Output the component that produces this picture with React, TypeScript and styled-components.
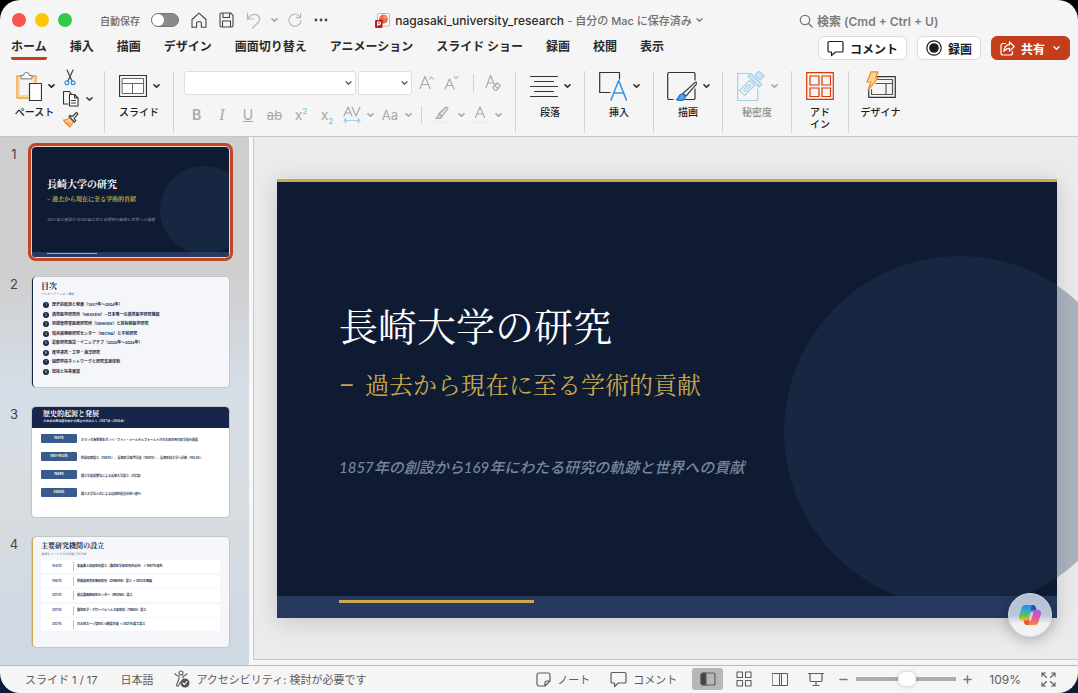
import React from "react";
import styled, { createGlobalStyle, css } from "styled-components";

const ui = `Inter, "Noto Sans CJK JP", sans-serif`;
const serif = `"Noto Serif CJK JP", "Noto Sans CJK JP", serif`;

const Global = createGlobalStyle`
  *, *::before, *::after { box-sizing: border-box; }
  html { background: linear-gradient(#000 0%, #000 50%, #0a1c38 50%); min-height: 100%; }
  body { margin: 0; font-family: ${ui}; color: #222; }
  button, input, select { font-family: inherit; }
  ol, ul { list-style: none; margin: 0; padding: 0; }
`;

/* ---------- window frame ---------- */

const Window = styled.div`
  display: grid;
  grid-template-rows: auto 1fr auto;
  min-height: 100vh;
  border-radius: 20px;
  overflow: hidden;
  background: #f5f5f5;
`;

const bare = css`
  border: 0;
  padding: 0;
  margin: 0;
  background: none;
  color: inherit;
`;

const IconButton = styled.button<{ $w?: number; $tone?: string }>`
  ${bare}
  display: inline-flex;
  align-items: center;
  justify-content: center;
  flex: none;
  width: ${(p) => (p.$w ? `${p.$w}px` : "auto")};
  color: ${(p) => p.$tone || "#444"};
`;

/* ---------- title bar ---------- */

const TitleBar = styled.div`
  display: grid;
  grid-template-columns: 1fr auto 1fr;
  align-items: center;
  height: 36px;
  padding: 4px 12px 0;
`;

const TitleLeft = styled.div`
  display: flex;
  align-items: center;
`;

const Lights = styled.div`
  display: flex;
  gap: 9px;
`;

const Light = styled.button<{ $color: string }>`
  ${bare}
  width: 14px;
  height: 14px;
  border-radius: 50%;
  background: ${(p) => p.$color};
`;

const AutoSave = styled.label`
  display: flex;
  align-items: center;
  gap: 11px;
  margin-left: 28px;
  font-size: 10px;
  font-weight: 500;
  color: #6b6b6b;
`;

const Toggle = styled.input`
  appearance: none;
  margin: 0;
  width: 28px;
  height: 14px;
  border-radius: 7px;
  background: #8a8a8a;
  border: 1px solid #777;
  &::before {
    content: "";
    display: block;
    width: 12px;
    height: 12px;
    border-radius: 50%;
    background: #fff;
  }
`;

const QuickTools = styled.div`
  display: flex;
  align-items: center;
  gap: 10px;
  margin-left: 12px;
`;

const DocTitle = styled.button`
  ${bare}
  display: flex;
  align-items: center;
  gap: 4px;
  font-size: 12px;
  font-weight: 500;
  color: #2b2b2b;
  white-space: nowrap;
`;

const DocState = styled.span`
  font-size: 11px;
  color: #6e6e6e;
`;

const Search = styled.label`
  justify-self: end;
  display: flex;
  align-items: center;
  gap: 4px;
  margin: 2px 115px 0 0;
  color: #777;
`;

const SearchInput = styled.input`
  ${bare}
  width: 134px;
  height: 20px;
  font-size: 12px;
  font-weight: 600;
  outline: none;
  &::placeholder { color: #7c7c7c; opacity: 1; }
`;

/* ---------- tabs ---------- */

const TabBar = styled.div`
  display: flex;
  justify-content: space-between;
  height: 24px;
  padding: 0 8px 0 11px;
`;

const Tabs = styled.nav`
  display: flex;
  gap: 23px;
`;

const Tab = styled.button<{ $active?: boolean }>`
  ${bare}
  height: 24px;
  padding-bottom: 3px;
  font-size: 12px;
  line-height: 20px;
  font-weight: 700;
  color: #2a2a2a;
  white-space: nowrap;
  ${(p) =>
    p.$active &&
    css`
      background: linear-gradient(#c43e1c, #c43e1c) 0 100% / 100% 3px no-repeat;
      border-radius: 2px;
    `}
`;

const Actions = styled.div`
  display: flex;
  gap: 10px;
`;

const Action = styled.button<{ $primary?: boolean }>`
  ${bare}
  display: flex;
  align-items: center;
  gap: 6px;
  height: 24px;
  padding: 0 8px;
  border: 1px solid ${(p) => (p.$primary ? "#c43e1c" : "#dcdcdc")};
  border-radius: 6px;
  background: ${(p) => (p.$primary ? "#c43e1c" : "#fff")};
  color: ${(p) => (p.$primary ? "#fff" : "#1c1c1c")};
  font-size: 12px;
  font-weight: 700;
  white-space: nowrap;
`;

/* ---------- ribbon ---------- */

const Ribbon = styled.div`
  display: flex;
  height: 77px;
  padding: 11px 0 3px;
  border-bottom: 1px solid #c6c6c6;
`;

const Group = styled.section<{ $w: number; $last?: boolean }>`
  flex: none;
  width: ${(p) => p.$w}px;
  display: flex;
  flex-direction: column;
  align-items: center;
  border-right: ${(p) => (p.$last ? 0 : "1px solid #d4d4d4")};
`;

const ClipboardGroup = styled(Group)`
  flex-direction: row;
  align-items: flex-start;
  padding-left: 14px;
  gap: 7px;
`;

const Stack = styled.div`
  display: flex;
  flex-direction: column;
  align-items: center;
`;

const SmallStack = styled.div`
  display: grid;
  grid-template-rows: 17px 17px 17px;
  row-gap: 4px;
  align-items: center;
  justify-items: start;
  margin-top: -2px;
`;

const BigButton = styled.button`
  ${bare}
  display: flex;
  align-items: center;
  gap: 6px;
  height: 30px;
`;

const Caption = styled.span<{ $muted?: boolean }>`
  margin-top: 5px;
  font-size: 10px;
  line-height: 12px;
  font-weight: 500;
  text-align: center;
  color: ${(p) => (p.$muted ? "#8d8d8d" : "#1c1c1c")};
`;

const FontGroup = styled(Group)`
  align-items: stretch;
  padding-left: 10px;
  gap: 8px;
`;

const FontRow = styled.div`
  display: flex;
  align-items: center;
  height: 24px;
`;

const SelectBox = styled.span<{ $w: number }>`
  position: relative;
  display: inline-flex;
  width: ${(p) => p.$w}px;
  margin-right: 2px;
  svg {
    position: absolute;
    right: 4px;
    top: 9px;
    pointer-events: none;
    color: #555;
  }
`;

const Select = styled.select`
  appearance: none;
  width: 100%;
  height: 24px;
  border: 1px solid #dedede;
  border-radius: 3px;
  background: #fff;
`;

const Rule = styled.span`
  width: 1px;
  height: 18px;
  margin: 0 11px 0 9px;
  background: #d0d0d0;
`;

const Format = styled.button<{ $w: number; $size?: number }>`
  ${bare}
  flex: none;
  width: ${(p) => p.$w}px;
  font-size: ${(p) => p.$size || 14}px;
  line-height: 20px;
  color: #a9a9a9;
  text-align: center;
  b { font-weight: 600; }
  i { font-family: "Liberation Serif", serif; font-size: 16px; }
`;

const Script = styled.span<{ $down?: boolean }>`
  color: #8fc4e0;
  font-size: 8px;
  font-weight: 600;
  line-height: 0;
  vertical-align: ${(p) => (p.$down ? "-4px" : "6px")};
`;

/* ---------- work area ---------- */

const Work = styled.main`
  display: grid;
  grid-template-columns: 249px 1fr;
  min-width: 0;
  border-bottom: 1px solid #b9b9b9;
`;

const Panel = styled.aside`
  padding-top: 10px;
  background: linear-gradient(#cfcece 0%, #d0cfd0 27%, #d2d8de 40%, #d5dee7 48%, #d9dcdf 70%, #d2dae2 85%, #cfd9e3 100%);
`;

const ThumbItem = styled.li`
  display: grid;
  grid-template-columns: 32px 197px;
  height: 110px;
  & + & { margin-top: 20px; }
`;

const ThumbNumber = styled.span`
  padding-right: 4px;
  font-size: 13px;
  line-height: 15px;
  text-align: center;
  color: #444;
`;

const Thumb = styled.button<{ $bg: string; $selected?: boolean; $edge?: string }>`
  ${bare}
  position: relative;
  display: flex;
  flex-direction: column;
  justify-content: flex-start;
  align-items: stretch;
  text-align: left;
  height: 110px;
  border-radius: 4px;
  background: ${(p) => p.$bg};
  border-left: ${(p) => (p.$edge ? `1px solid ${p.$edge}` : 0)};
  box-shadow: ${(p) =>
    p.$selected ? "0 0 0 1px #e8d8d4, 0 0 0 4px #c14526" : "0 0 0 1px #c3c5c8"};
`;

const Clip = styled.span`
  position: relative;
  display: block;
  height: 110px;
  border-radius: 3px;
  overflow: hidden;
`;

const EditorColumn = styled.div`
  display: grid;
  grid-template-rows: 1fr 5px;
  min-width: 0;
  border-left: 4px solid #f7f7f7;
`;

const Editor = styled.section`
  position: relative;
  display: flex;
  align-items: center;
  overflow: hidden;
  padding: 0 21px 0 23px;
  background: #ebebeb;
  border-left: 1px solid #c9c9c9;
  border-bottom: 1px solid #c6c6c6;
`;

const Slide = styled.article`
  position: relative;
  width: 100%;
  aspect-ratio: 780 / 439;
  background: #0f1b33;
  border-top: 3px solid #c9a94a;
  box-shadow: 0 4px 22px rgba(0, 0, 0, 0.16);
`;

const Disc = styled.span`
  position: absolute;
  left: 65%;
  top: 17%;
  width: 45%;
  aspect-ratio: 1;
  border-radius: 50%;
  background: rgba(39, 64, 93, 0.33);
`;

const SlideFooter = styled.span<{ $mini?: boolean }>`
  position: absolute;
  left: 0;
  right: 0;
  bottom: 0;
  height: ${(p) => (p.$mini ? 5 : 22)}px;
  padding: ${(p) => (p.$mini ? "1px 15px" : "4px 62px")};
  background: #253a5e;
  &::before {
    content: "";
    display: block;
    width: ${(p) => (p.$mini ? "50px" : "195px")};
    height: ${(p) => (p.$mini ? 1 : 3)}px;
    background: #c9a94a;
  }
`;

const Cover = styled.div`
  position: relative;
  padding: 114px 0 0 62px;
`;

const CoverTitle = styled.h1`
  margin: 0;
  font-family: ${serif};
  font-size: 39px;
  line-height: 56px;
  font-weight: 400;
  color: #fff;
`;

const CoverSub = styled.p`
  margin: 16px 0 0;
  font-family: ${serif};
  font-size: 24px;
  line-height: 32px;
  color: #c9a94a;
`;

const Dash = styled.span`
  display: inline-block;
  width: 26px;
  font-family: Roboto, sans-serif;
`;

const CoverNote = styled.p`
  margin: 55px 0 0;
  font-family: Lato, "Noto Sans CJK JP", sans-serif;
  font-size: 15px;
  line-height: 20px;
  font-style: italic;
  font-weight: 500;
  color: #76859c;
`;

const Mini = styled.span<{
  $size: number;
  $lh: number;
  $color: string;
  $top?: number;
  $left?: number;
  $bold?: boolean;
  $serif?: boolean;
  $italic?: boolean;
}>`
  display: block;
  position: relative;
  margin: ${(p) => p.$top || 0}px 0 0 ${(p) => p.$left || 0}px;
  font-family: ${(p) => (p.$serif ? serif : `Lato, "Noto Sans CJK JP", sans-serif`)};
  font-size: ${(p) => p.$size}px;
  line-height: ${(p) => p.$lh}px;
  font-weight: ${(p) => (p.$bold ? 700 : 400)};
  font-style: ${(p) => (p.$italic ? "italic" : "normal")};
  color: ${(p) => p.$color};
  white-space: nowrap;
`;

const AgendaList = styled.span`
  display: flex;
  flex-direction: column;
  justify-content: space-between;
  height: 73px;
  margin: 5px 0 0 10px;
`;

const AgendaRow = styled.span`
  display: flex;
  align-items: center;
  gap: 3px;
  height: 6px;
`;

const AgendaDot = styled.span`
  width: 6px;
  height: 6px;
  border-radius: 50%;
  background: #16264a;
  color: #fff;
  font-size: 3px;
  line-height: 6px;
  text-align: center;
`;

const MiniHead = styled.span`
  display: block;
  height: 21px;
  margin-bottom: 6px;
  padding: 2px 0 0 11px;
  border-radius: 4px 4px 0 0;
  background: #16264a;
`;

const TimeRow = styled.span`
  display: flex;
  align-items: center;
  gap: 4px;
  height: 9px;
  margin: 0 0 9px 9px;
`;

const YearBadge = styled.span`
  width: 36px;
  height: 9px;
  border-radius: 1px;
  background: #385a8c;
  color: #fff;
  font-size: 3px;
  line-height: 9px;
  font-weight: 700;
  text-align: center;
`;

const TimeText = styled.span`
  padding-top: 4px;
  font-size: 3px;
  line-height: 5px;
  font-weight: 700;
  color: #2c3a54;
  white-space: nowrap;
`;

const MiniTable = styled.span`
  display: flex;
  flex-direction: column;
  justify-content: space-between;
  height: 71px;
  margin: 3px 9px 0 8px;
`;

const MiniRow = styled.span`
  display: grid;
  grid-template-columns: 33px 1fr;
  align-items: center;
  height: 13px;
  background: #fff;
  font-size: 3px;
  line-height: 9px;
  font-weight: 700;
  color: #24324e;
  white-space: nowrap;
`;

const MiniYear = styled.span`
  text-align: center;
  border-right: 1px solid #b9c1cd;
  color: #385a8c;
`;

const MiniCell = styled.span`
  padding-left: 3px;
`;

const Copilot = styled.button`
  ${bare}
  position: absolute;
  right: 26px;
  bottom: 22px;
  width: 44px;
  height: 44px;
  display: flex;
  align-items: center;
  justify-content: center;
  border-radius: 50%;
  border: 1px solid #d5deea;
  background: linear-gradient(#b4c0d6 0%, #bcc6d8 50%, #eef0f2 70%, #f2f3f4 100%);
  box-shadow: 0 3px 14px rgba(0, 0, 0, 0.25);
`;

/* ---------- status bar ---------- */

const Status = styled.footer`
  display: flex;
  align-items: center;
  justify-content: space-between;
  height: 27px;
  padding: 0 22px 1px 25px;
  font-size: 12px;
  color: #5c5c5c;
`;

const StatusSide = styled.div`
  display: flex;
  align-items: center;
`;

const StatusButton = styled.button<{ $left?: number }>`
  ${bare}
  display: flex;
  align-items: center;
  gap: 6px;
  margin-left: ${(p) => p.$left || 0}px;
  font-size: 11px;
  white-space: nowrap;
`;

const ViewButton = styled.button<{ $active?: boolean }>`
  ${bare}
  display: flex;
  align-items: center;
  justify-content: center;
  width: 31px;
  height: 22px;
  margin-left: 15px;
  border-radius: 3px;
  background: ${(p) => (p.$active ? "#b6b8b7" : "none")};
`;

const ZoomSlider = styled.input`
  appearance: none;
  width: 100px;
  height: 16px;
  margin: 0 7px;
  background: linear-gradient(#acacac, #acacac) 0 50% / 100% 4px no-repeat;
  &::-webkit-slider-thumb {
    appearance: none;
    width: 18px;
    height: 14px;
    border-radius: 7px;
    background: #fff;
    box-shadow: 0 0 4px rgba(0, 0, 0, 0.2);
  }
`;

const ZoomValue = styled.span`
  margin: 0 20px 0 17px;
`;

/* ---------- icons ---------- */

type IconProps = { w: number; h: number; children: React.ReactNode; sw?: number };
const Icon = ({ w, h, children, sw = 1 }: IconProps) => (
  <svg
    width={w}
    height={h}
    viewBox={`0 0 ${w} ${h}`}
    fill="none"
    stroke="currentColor"
    strokeWidth={sw}
    strokeLinecap="round"
    strokeLinejoin="round"
    aria-hidden="true"
  >
    {children}
  </svg>
);

const Chevron = ({ bold }: { bold?: boolean }) => (
  <Icon w={7} h={6} sw={bold ? 1.6 : 1.3}>
    <path d="M1 1.8 3.5 4.200 6 1.800" />
  </Icon>
);

const HomeIcon = () => (
  <Icon w={16} h={17} sw={1.1}>
    <path d="M1 7.5 8 1.2l7 6.3v7.8h-4.6v-4.5a1 1 0 0 0-1-1H6.6a1 1 0 0 0-1 1v4.5H1z" />
  </Icon>
);

const SaveIcon = () => (
  <Icon w={15} h={16} sw={1.1}>
    <path d="M1 2.5A1.5 1.5 0 0 1 2.5 1h9.2L14 3.3v10.200a1.5 1.5 0 0 1-1.5 1.5h-10A1.5 1.5 0 0 1 1 13.5zM4 1v4.5h6.5V1M3.5 15V9h8v6" />
  </Icon>
);

const UndoIcon = () => (
  <Icon w={15} h={17} sw={1.2}>
    <path d="M1.5 1v6h6M1.5 7C4 3.5 7 1.8 10 2.6c3.600 1 4.700 4.800 2.400 7.600L6.500 16" />
  </Icon>
);

const RedoIcon = () => (
  <Icon w={15} h={16} sw={1.2}>
    <path d="M13.500 1v4.500H9M13.300 5.300A6.500 6.500 0 1 0 14 8.500" />
  </Icon>
);

const MoreIcon = () => (
  <Icon w={14} h={4}>
    <g fill="currentColor" stroke="none">
      <circle cx="2" cy="2" r="1.4" />
      <circle cx="7" cy="2" r="1.4" />
      <circle cx="12" cy="2" r="1.4" />
    </g>
  </Icon>
);

const FileIcon = () => (
  <svg width="16" height="16" viewBox="0 0 16 16" aria-hidden="true">
    <rect x="2.5" y="1.5" width="12" height="12.5" rx="1.5" fill="#fff" stroke="#b9b9b9" />
    <circle cx="8.5" cy="7" r="4.500" fill="#ed6c47" />
    <path d="M8.500 2.500A4.500 4.500 0 0 1 13 7H8.500z" fill="#ff8f6b" />
    <path d="M4 7h4.500V11.500A4.500 4.500 0 0 1 4 7z" fill="#d35230" />
    <rect x="0" y="8" width="7.5" height="8" rx="1" fill="#b7221f" />
    <path d="M2.800 14V10h1.500a1.200 1.200 0 0 1 0 2.400H2.800" fill="none" stroke="#fff" strokeWidth="1.1" />
  </svg>
);

const SearchIcon = () => (
  <Icon w={14} h={14} sw={1.3}>
    <circle cx="6" cy="6" r="4.7" />
    <path d="m9.500 9.500 3.700 3.500" />
  </Icon>
);

const CommentIcon = () => (
  <Icon w={17} h={17} sw={1.2}>
    <path d="M2.300 1.500h12.400a1.300 1.300 0 0 1 1.300 1.300v7.900a1.300 1.300 0 0 1-1.300 1.300H8.500L4.500 15.500V12H2.300A1.300 1.300 0 0 1 1 10.700V2.800a1.300 1.300 0 0 1 1.300-1.300z" />
  </Icon>
);

const RecordIcon = () => (
  <Icon w={16} h={16} sw={1.2}>
    <circle cx="8" cy="8" r="7.2" />
    <circle cx="8" cy="8" r="4.8" fill="currentColor" stroke="none" />
  </Icon>
);

const ShareIcon = () => (
  <Icon w={15} h={15} sw={1.2}>
    <path d="M5.500 2.500H3a2 2 0 0 0-2 2V12a2 2 0 0 0 2 2h7.500a2 2 0 0 0 2-2v-1.500" />
    <path d="M9.500 1v2.700C6 3.900 4.200 6.500 3.800 10.300 5.400 8.200 7 7.400 9.500 7.400v2.700L14.200 5.500z" />
  </Icon>
);

const PasteIcon = () => (
  <Icon w={28} h={30}>
    <path d="M7 5H3v22h11M18 5h4v6" stroke="#ee9a3a" strokeWidth="1.3" />
    <path d="M5 7v18h9M20 7v4" stroke="#fbd78c" strokeWidth="2" />
    <path d="M7 7.500V4.500h2.500a3 3 0 0 1 6 0H18v3z" fill="#f8f8f8" stroke="#777" />
    <rect x="15.500" y="12.500" width="12" height="17" fill="#fff" stroke="#333" strokeWidth="1.2" />
  </Icon>
);

const CutIcon = () => (
  <Icon w={16} h={17} sw={1.2}>
    <path d="M5 1l5 11M11 1 6 12" stroke="#444" />
    <circle cx="4.900" cy="13.800" r="1.900" stroke="#3a8fd6" />
    <circle cx="11.100" cy="13.800" r="1.900" stroke="#3a8fd6" />
  </Icon>
);

const CopyIcon = () => (
  <Icon w={18} h={17} sw={1.1}>
    <path d="M6 14H1.500V1.500H7L9 3.500" stroke="#333" />
    <path d="M7.500 4.500h5l3.500 3.500v8H7.500zM12.500 4.500V8H16M9.500 10.500h4M9.500 13h4" fill="#fff" stroke="#333" />
  </Icon>
);

const BrushIcon = () => (
  <Icon w={17} h={17} sw={1.2}>
    <path d="M1.500 9c3 .5 4.500-.5 6-2.500l4 4.500C10 13 8.500 14.500 8 16 5.500 14.500 3 12 1.500 9z" fill="#fbd9a0" stroke="#ee8a2d" />
    <path d="M4 12l2-1M6 14l2-2" stroke="#ee8a2d" />
    <path d="M7 5.500 12.500 11l1.300-1.300-1.800-2 3.800-4.700L14.500 1.500 10 5.700 8.300 4.200z" fill="#fff" stroke="#444" />
  </Icon>
);

const SlideIcon = () => (
  <Icon w={28} h={24}>
    <path d="M.5 1.500h27v21H.5z" stroke="#333" strokeWidth="1.2" />
    <path d="M3.500 4.500h21v15h-21zM3.500 9.500h21M13.500 9.500v10" fill="#fff" stroke="#666" />
  </Icon>
);

const ParagraphIcon = () => (
  <Icon w={28} h={24}>
    <path d="M.5 2.500h27M4.500 7.500h19M.5 12.500h27M4.500 17.500h19M.5 22.500h27" stroke="#333" />
  </Icon>
);

const InsertIcon = () => (
  <Icon w={28} h={30} sw={1.2}>
    <path d="M11 21.500H.7v-20H20.500V8" stroke="#333" />
    <path d="M12 29 19.700 9.500 27.400 29M14.600 22h10.200" stroke="#3a96dd" strokeWidth="1.6" />
  </Icon>
);

const DrawIcon = () => (
  <Icon w={30} h={30} sw={1.2}>
    <path d="M6 28.500H2a1.300 1.300 0 0 1-1.300-1.300V2.800A1.300 1.300 0 0 1 2 1.500h24.700a1.300 1.300 0 0 1 1.300 1.300V9M28 18v9.200a1.300 1.300 0 0 1-1.300 1.300H18" stroke="#333" />
    <path d="M16 22.500 28 11.500c1.500-1 2.500.3 1.500 1.500L19 25z" fill="#fff" stroke="#444" />
    <path d="M9.500 28.500c3-1 1.500-5 5-5.500 3-.3 4.500 2.500 3 5-1.500 2.300-5.500 2-8 .5z" fill="#5a9be8" stroke="#1d6fc8" />
  </Icon>
);

const SensitivityIcon = () => (
  <Icon w={28} h={31} sw={1.2}>
    <g stroke="#a5cfe6">
      <path d="M11 2.500H.7v27h20V18" />
      <g transform="rotate(-45 15 12)">
        <rect x="1" y="8.500" width="14" height="7" fill="#f5f5f5" />
        <rect x="4" y="10.800" width="8.500" height="2.500" rx="1.200" />
        <rect x="17" y="4" width="4" height="16" rx="1" fill="#cfe6f2" />
        <path d="M23 8.500h5.500v7H23z" fill="#cfe6f2" />
      </g>
    </g>
  </Icon>
);

const AddInIcon = () => (
  <Icon w={28} h={30} sw={1.2}>
    <path d="M.7 1.700h26.600v26.600H.7zM4 5h9v9H4zM16 5h8.500v9H16zM4 17h9v8.500H4zM16 17h8.500v8.500H16z" stroke="#d83b01" strokeLinejoin="miter" />
  </Icon>
);

const DesignerIcon = () => (
  <Icon w={31} h={30} sw={1.2}>
    <path d="M12 5.700h18.300v20.600H3.700V19" stroke="#333" />
    <path d="M12 8.500h15.500v15H6.500v-5M11 12.500h16.500M21 12.500v11" stroke="#555" />
    <path d="M6 .8h7L10.500 7H13L3 19.500 5.800 11H2z" fill="#fcd58a" stroke="#ee8a2d" />
  </Icon>
);

const GrowIcon = ({ down }: { down?: boolean }) => (
  <Icon w={15} h={16} sw={1.2}>
    {down ? (
      <>
        <path d="M1 14 5.500 4 10 14M2.800 10.500h5.400" />
        <path d="m10 1.500 2 2 2-2" stroke="#9dcbe3" />
      </>
    ) : (
      <>
        <path d="M1 13.500 6 1.500l5 12M2.800 9.500h6.400" />
        <path d="m10.500 4 2-2 2 2" stroke="#9dcbe3" />
      </>
    )}
  </Icon>
);

const ClearIcon = () => (
  <Icon w={16} h={18} sw={1.2}>
    <path d="M1 13.500 5.500 1.500l3.800 9M2.500 9h5.500" />
    <path d="m8 13.500 4-4.500 3.300 2.800-4 4.500-1.700-.3z M9.800 11.500l3.200 3" fill="#f5f5f5" />
  </Icon>
);

const SpacingIcon = () => (
  <Icon w={18} h={18} sw={1.2}>
    <path d="M1 10 5 1l4 9M2.500 7h5M9 1l4 9 4-9" />
    <path d="M1 14.500h7M3 12.500l-2 2 2 2M10 14.500h7M15 12.500l2 2-2 2" stroke="#9dcbe3" />
  </Icon>
);

const PenIcon = () => (
  <Icon w={16} h={18} sw={1.2}>
    <path d="M5 7.500 11.500 1.500c1.500-1 3 .6 2 2L8 10.500zM5 7.500l-1 3-2 2h4l2-2" fill="#ddd" />
    <path d="M0 16h15" stroke="#ebf1ef" strokeWidth="3" />
  </Icon>
);

const FontColorIcon = () => (
  <Icon w={16} h={18} sw={1.2}>
    <path d="M3.500 11.500 8 1l4.500 10.500M5 8h6" />
    <path d="M0 16h15" stroke="#ebf1ef" strokeWidth="3" />
  </Icon>
);

const AccessIcon = () => (
  <Icon w={16} h={18} sw={1.1}>
    <circle cx="7" cy="3" r="2" />
    <path d="M1 3.500c0 1.500 2.500 2 4 2.800V9L2.500 15c0 1.500 1.800 1.500 2.200.5L6.500 12M13 3.500c0 1.500-2.500 2-4 2.800V8" />
    <circle cx="11" cy="13" r="4.5" fill="#555" stroke="none" />
    <path d="m9 13 1.500 1.500 2.500-3" stroke="#fff" />
  </Icon>
);

const NoteIcon = () => (
  <Icon w={15} h={15} sw={1.2}>
    <path d="M3 1h9a2 2 0 0 1 2 2v6l-5 5H3a2 2 0 0 1-2-2V3a2 2 0 0 1 2-2zM14 9h-3a2 2 0 0 0-2 2v3" />
  </Icon>
);

const NormalViewIcon = () => (
  <Icon w={16} h={14} sw={1.2}>
    <rect x="1" y="1" width="14" height="12" rx="2" />
    <path d="M3 1h3v12H3a2 2 0 0 1-2-2V3a2 2 0 0 1 2-2z" fill="#444" />
  </Icon>
);

const GridViewIcon = () => (
  <Icon w={16} h={16} sw={1.1}>
    <path d="M1 1h5.500v5.500H1zM9.500 1H15v5.500H9.500zM1 9.500h5.500V15H1zM9.500 9.500H15V15H9.500z" />
  </Icon>
);

const BookIcon = () => (
  <Icon w={16} h={15}>
    <path d="M.5 1.500h15v12H.5zM7.500 1.500v12M9.500 1.500v12" />
  </Icon>
);

const ShowIcon = () => (
  <Icon w={16} h={15} sw={1.2}>
    <path d="M.6 1.500h14.800M2 1.500v7a1 1 0 0 0 1 1h10a1 1 0 0 0 1-1v-7M8 9.500V13M5 13.500h6" />
  </Icon>
);

const FullIcon = () => (
  <Icon w={15} h={15} sw={1.1}>
    <path d="M1 4.500V1h3.500M1 1l4.500 4.500M10.500 1H14v3.500M14 1 9.500 5.500M1 10.500V14h3.500M1 14l4.500-4.500M14 10.500V14h-3.500M14 14 9.500 9.500" />
  </Icon>
);

const MinusIcon = () => (
  <Icon w={9} h={9} sw={1.5}>
    <path d="M1 4.500h7" />
  </Icon>
);

const PlusIcon = () => (
  <Icon w={9} h={9} sw={1.5}>
    <path d="M1 4.500h7M4.500 1v7" />
  </Icon>
);

const CopilotIcon = () => (
  <svg width="24" height="22" viewBox="0 0 24 22" aria-hidden="true">
    <defs>
      <linearGradient id="cpLeft" x1="0" y1="0" x2="0" y2="1">
        <stop offset="0" stopColor="#2f8fe0" />
        <stop offset=".45" stopColor="#35b3b8" />
        <stop offset=".7" stopColor="#6cc04a" />
        <stop offset="1" stopColor="#f7c600" />
      </linearGradient>
      <linearGradient id="cpRight" x1="0" y1="0" x2="0" y2="1">
        <stop offset="0" stopColor="#a45be0" />
        <stop offset=".5" stopColor="#e2559f" />
        <stop offset="1" stopColor="#f9863c" />
      </linearGradient>
    </defs>
    <path d="M7 1h8c1.600 0 2.300 1 2.700 2.300L18.500 6h-3c-1.500 0-2.300.8-2.700 2l-1.900 6c-.5 1.600-1.300 2.500-3 2.500H4C1.500 16.500.5 14.700 1.200 12L3.500 4C4 2 5.200 1 7 1z" fill="url(#cpLeft)" />
    <path d="M13.500 1H15c1.600 0 2.300 1 2.700 2.300L18.500 6h-3c-1.500 0-2.300.5-2.700 1.500z" fill="#1b55c0" />
    <path d="M17 21H9c-1.600 0-2.300-1-2.700-2.300L5.700 16.500H8c1.700 0 2.500-.9 3-2.500l1.900-6c.4-1.200 1.200-2 2.700-2H20c2.500 0 3.500 1.800 2.800 4.500L20.500 18c-.5 2-1.700 3-3.500 3z" fill="url(#cpRight)" />
    <path d="M10.500 21H9c-1.600 0-2.300-1-2.700-2.300L5.700 16.500H8c1.500 0 2.300-.5 2.800-1.800z" fill="#f0502f" />
    <path d="m11 14 2-6h2.500l-2 7c-.5 1.400-1 1.900-2.500 2z" fill="#dfe5ee" opacity=".8" />
  </svg>
);

/* ---------- data ---------- */

const tabs = ["ホーム", "挿入", "描画", "デザイン", "画面切り替え", "アニメーション", "スライド ショー", "録画", "校閲", "表示"];

const agenda = [
  "歴史的起源と発展（1857年〜2004年）",
  "熱帯医学研究所（NEKKEN）—日本唯一の熱帯医学研究機関",
  "原爆後障害医療研究所（GENKEN）と放射線医学研究",
  "核兵器廃絶研究センター（RECNA）と平和研究",
  "最新研究施設・イニシアチブ（2020年〜2026年）",
  "産学連携・工学・海洋研究",
  "国際学術ネットワークと研究支援体制",
  "総括と将来展望",
];

const timeline = [
  ["1857年", "オランダ海軍軍医ポンペ・ファン・メールデルフォールトが日本初の西洋医学校を開設"],
  ["1861–1923年", "附属病院設立（1861年）、長崎医学専門学校（1901年）、長崎医科大学へ昇格（1923年）"],
  ["1949年", "国立学校設置法による長崎大学設立（5学部）"],
  ["2004年", "国立大学法人化による自律的運営体制へ移行"],
];

const institutes = [
  ["1942年", "東亜風土病研究所設立（熱帯医学研究所の前身）→ 1967年改称"],
  ["1962年", "原爆後障害医療研究所（GENKEN）設立 → 2013年再編"],
  ["2012年", "核兵器廃絶研究センター（RECNA）設立"],
  ["2015年", "熱帯医学・グローバルヘルス研究科（TMGH）設立"],
  ["2021年", "日本初スーツ型BSL-4施設完成 → 2021年竣工設立"],
];

const title = "長崎大学の研究";
const subtitle = "過去から現在に至る学術的貢献";
const note = "1857年の創設から169年にわたる研究の軌跡と世界への貢献";

/* ---------- page ---------- */

const RibbonGroup = ({
  w, icon, label, label2, chevron = true, muted, last,
}: {
  w: number; icon: React.ReactNode; label: string; label2?: string; chevron?: boolean; muted?: boolean; last?: boolean;
}) => (
  <Group $w={w} $last={last}>
    <BigButton aria-label={label}>
      {icon}
      {chevron && (
        <IconButton as="span" $tone={muted ? "#a5a5a5" : "#333"}>
          <Chevron bold />
        </IconButton>
      )}
    </BigButton>
    <Caption $muted={muted}>
      {label}
      {label2 && <br />}
      {label2}
    </Caption>
  </Group>
);

const Header = () => (
  <header>
    <TitleBar>
      <TitleLeft>
        <Lights>
          <Light $color="#f95350" aria-label="閉じる" />
          <Light $color="#fac800" aria-label="最小化" />
          <Light $color="#35c84b" aria-label="拡大" />
        </Lights>
        <AutoSave>
          自動保存
          <Toggle type="checkbox" />
        </AutoSave>
        <QuickTools>
          <IconButton $w={16} aria-label="ホーム画面"><HomeIcon /></IconButton>
          <IconButton $w={18} aria-label="保存"><SaveIcon /></IconButton>
          <IconButton $w={16} $tone="#b5b5b5" aria-label="元に戻す"><UndoIcon /></IconButton>
          <IconButton $w={7} $tone="#a5a5a5" aria-label="元に戻す一覧"><Chevron bold /></IconButton>
          <IconButton $w={14} $tone="#b9b9b9" aria-label="やり直し"><RedoIcon /></IconButton>
          <IconButton $w={18} aria-label="その他"><MoreIcon /></IconButton>
        </QuickTools>
      </TitleLeft>
      <DocTitle>
        <FileIcon />
        <span>
          nagasaki_university_research <DocState>- 自分の Mac に保存済み</DocState>
        </span>
        <IconButton as="span" $tone="#777"><Chevron /></IconButton>
      </DocTitle>
      <Search>
        <SearchIcon />
        <SearchInput type="text" aria-label="検索" placeholder="検索 (Cmd + Ctrl + U)" />
      </Search>
    </TitleBar>
    <TabBar>
      <Tabs>
        {tabs.map((t, i) => (
          <Tab key={t} $active={i === 0}>{t}</Tab>
        ))}
      </Tabs>
      <Actions>
        <Action><CommentIcon />コメント</Action>
        <Action><RecordIcon />録画</Action>
        <Action $primary>
          <ShareIcon />共有
          <IconButton as="span" $tone="#fff" $w={10}><Chevron /></IconButton>
        </Action>
      </Actions>
    </TabBar>
    <Ribbon>
      <ClipboardGroup $w={105}>
        <Stack>
          <BigButton aria-label="ペースト">
            <PasteIcon />
            <Chevron bold />
          </BigButton>
          <Caption>ペースト</Caption>
        </Stack>
        <SmallStack>
          <IconButton $w={16} aria-label="切り取り"><CutIcon /></IconButton>
          <BigButton as="span">
            <IconButton $w={18} aria-label="コピー"><CopyIcon /></IconButton>
            <IconButton $w={7} aria-label="コピーのオプション"><Chevron bold /></IconButton>
          </BigButton>
          <IconButton $w={17} aria-label="書式のコピー"><BrushIcon /></IconButton>
        </SmallStack>
      </ClipboardGroup>
      <RibbonGroup w={69} icon={<SlideIcon />} label="スライド" />
      <FontGroup $w={342}>
        <FontRow>
          <SelectBox $w={172}>
            <Select aria-label="フォント"><option /></Select>
            <Chevron />
          </SelectBox>
          <SelectBox $w={54}>
            <Select aria-label="フォント サイズ"><option /></Select>
            <Chevron />
          </SelectBox>
          <IconButton $w={25} $tone="#a9a9a9" aria-label="拡大"><GrowIcon /></IconButton>
          <IconButton $w={25} $tone="#a9a9a9" aria-label="縮小"><GrowIcon down /></IconButton>
          <Rule />
          <IconButton $w={16} $tone="#a9a9a9" aria-label="書式のクリア"><ClearIcon /></IconButton>
        </FontRow>
        <FontRow>
          <Format $w={25}><b>B</b></Format>
          <Format $w={26}><i>I</i></Format>
          <Format $w={26}><u>U</u></Format>
          <Format $w={27} $size={13}><s>ab</s></Format>
          <Format $w={26}>x<Script>2</Script></Format>
          <Format $w={26}>x<Script $down>2</Script></Format>
          <IconButton $w={24} $tone="#a9a9a9" aria-label="文字間隔"><SpacingIcon /></IconButton>
          <IconButton $w={12} $tone="#a9a9a9" aria-label="文字間隔一覧"><Chevron bold /></IconButton>
          <Format $w={28} $size={13}>Aa</Format>
          <IconButton $w={8} $tone="#a9a9a9" aria-label="文字種一覧"><Chevron bold /></IconButton>
          <Rule />
          <IconButton $w={18} $tone="#a9a9a9" aria-label="蛍光ペン"><PenIcon /></IconButton>
          <IconButton $w={20} $tone="#a9a9a9" aria-label="蛍光ペンの色"><Chevron bold /></IconButton>
          <IconButton $w={18} $tone="#a9a9a9" aria-label="文字色"><FontColorIcon /></IconButton>
          <IconButton $w={18} $tone="#a9a9a9" aria-label="文字色一覧"><Chevron bold /></IconButton>
        </FontRow>
      </FontGroup>
      <RibbonGroup w={69} icon={<ParagraphIcon />} label="段落" />
      <RibbonGroup w={69} icon={<InsertIcon />} label="挿入" />
      <RibbonGroup w={69} icon={<DrawIcon />} label="描画" />
      <RibbonGroup w={69} icon={<SensitivityIcon />} label="秘密度" muted />
      <RibbonGroup w={57} icon={<AddInIcon />} label="アド" label2="イン" chevron={false} />
      <RibbonGroup w={63} icon={<DesignerIcon />} label="デザイナ" chevron={false} last />
    </Ribbon>
  </header>
);

const ThumbPanel = () => (
  <Panel>
    <ol>
      <ThumbItem>
        <ThumbNumber>1</ThumbNumber>
        <Thumb $bg="#0f1b33" $selected>
          <Clip>
            <Disc />
            <Mini $size={10} $lh={14} $top={30} $left={15} $color="#fff" $serif $bold>{title}</Mini>
            <Mini $size={6} $lh={8} $top={4} $left={15} $color="#c9a94a" $serif $bold>– {subtitle}</Mini>
            <Mini $size={4} $lh={6} $top={14} $left={15} $color="#8592a6" $italic>{note}</Mini>
            <SlideFooter $mini />
          </Clip>
        </Thumb>
      </ThumbItem>
      <ThumbItem>
        <ThumbNumber>2</ThumbNumber>
        <Thumb $bg="#f5f6fa" $edge="#16264a">
          <Mini $size={8} $lh={10} $top={4} $left={8} $color="#16264a" $serif $bold>目次</Mini>
          <Mini $size={3} $lh={5} $top={1} $left={8} $color="#6b7a90" $italic>プレゼンテーション構成</Mini>
          <AgendaList>
            {agenda.map((t, i) => (
              <AgendaRow key={t}>
                <AgendaDot>{i + 1}</AgendaDot>
                <Mini $size={4} $lh={6} $color="#24324e" $bold>{t}</Mini>
              </AgendaRow>
            ))}
          </AgendaList>
        </Thumb>
      </ThumbItem>
      <ThumbItem>
        <ThumbNumber>3</ThumbNumber>
        <Thumb $bg="#ffffff">
          <MiniHead>
            <Mini $size={7} $lh={9} $color="#fff" $serif $bold>歴史的起源と発展</Mini>
            <Mini $size={3} $lh={6} $color="#dfe5ee" $italic $bold>日本初の西洋医学校から国立大学法人へ（1857年〜2004年）</Mini>
          </MiniHead>
          {timeline.map(([y, t]) => (
            <TimeRow key={y}>
              <YearBadge>{y}</YearBadge>
              <TimeText>{t}</TimeText>
            </TimeRow>
          ))}
        </Thumb>
      </ThumbItem>
      <ThumbItem>
        <ThumbNumber>4</ThumbNumber>
        <Thumb $bg="#f5f6fa" $edge="#c9a94a">
          <Mini $size={7} $lh={9} $top={4} $left={8} $color="#16264a" $serif $bold>主要研究機関の設立</Mini>
          <Mini $size={3} $lh={5} $top={2} $left={8} $color="#6b7a90" $italic>長崎をリードする研究拠点の形成</Mini>
          <MiniTable>
            {institutes.map(([y, t]) => (
              <MiniRow key={y}>
                <MiniYear>{y}</MiniYear>
                <MiniCell>{t}</MiniCell>
              </MiniRow>
            ))}
          </MiniTable>
        </Thumb>
      </ThumbItem>
    </ol>
  </Panel>
);

const StatusBar = () => (
  <Status>
    <StatusSide>
      <StatusButton>スライド 1 / 17</StatusButton>
      <StatusButton $left={23}>日本語</StatusButton>
      <StatusButton $left={21}><AccessIcon />アクセシビリティ: 検討が必要です</StatusButton>
    </StatusSide>
    <StatusSide>
      <StatusButton><NoteIcon />ノート</StatusButton>
      <StatusButton $left={20}><CommentIcon />コメント</StatusButton>
      <ViewButton $active aria-label="標準"><NormalViewIcon /></ViewButton>
      <IconButton $w={42} $tone="#5c5c5c" aria-label="スライド一覧"><GridViewIcon /></IconButton>
      <IconButton $w={30} $tone="#5c5c5c" aria-label="閲覧表示"><BookIcon /></IconButton>
      <IconButton $w={42} $tone="#5c5c5c" aria-label="スライド ショー"><ShowIcon /></IconButton>
      <IconButton $w={12} $tone="#777" aria-label="縮小表示"><MinusIcon /></IconButton>
      <ZoomSlider type="range" aria-label="ズーム" min={0} max={100} defaultValue={51} />
      <IconButton $w={9} $tone="#777" aria-label="拡大表示"><PlusIcon /></IconButton>
      <ZoomValue>109%</ZoomValue>
      <IconButton $w={15} $tone="#5c5c5c" aria-label="ウィンドウに合わせる"><FullIcon /></IconButton>
    </StatusSide>
  </Status>
);

export default function App() {
  return (
    <>
      <Global />
      <Window>
        <Header />
        <Work>
          <ThumbPanel />
          <EditorColumn>
            <Editor>
              <Slide>
                <Disc />
                <Cover>
                  <CoverTitle>{title}</CoverTitle>
                  <CoverSub><Dash>–</Dash>{subtitle}</CoverSub>
                  <CoverNote>{note}</CoverNote>
                </Cover>
                <SlideFooter />
              </Slide>
              <Copilot aria-label="Copilot"><CopilotIcon /></Copilot>
            </Editor>
          </EditorColumn>
        </Work>
        <StatusBar />
      </Window>
    </>
  );
}
